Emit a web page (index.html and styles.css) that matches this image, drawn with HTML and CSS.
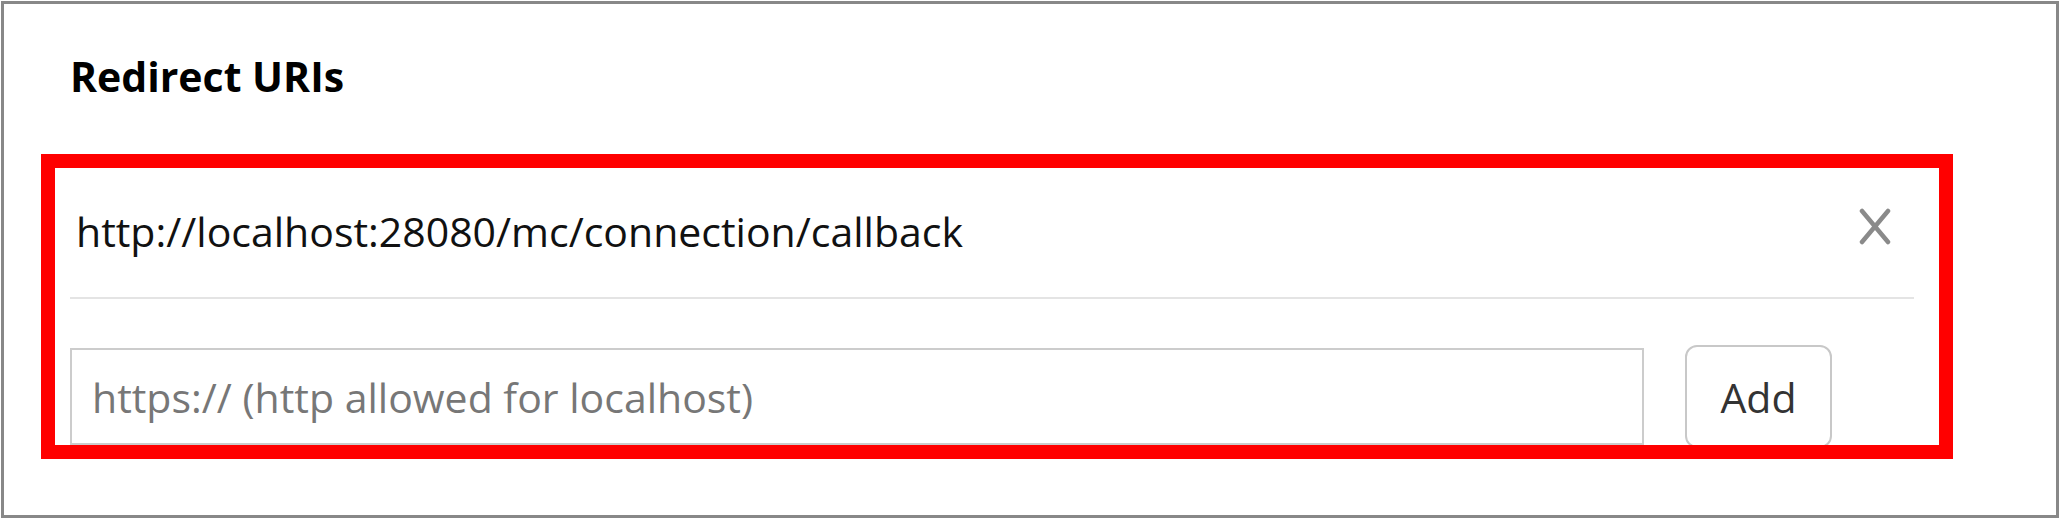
FILE: index.html
```html
<!DOCTYPE html>
<html lang="en">
<head>
    <meta charset="UTF-8">
    <title>Redirect URIs</title>
    <link rel="stylesheet" href="styles.css">
</head>
<body>
    <section class="panel">
        <div class="panel-body">
            <h2>Redirect URIs</h2>
            <div class="uri-item">
                <span class="uri-text">http://localhost:28080/mc/connection/callback</span>
                <button class="remove-btn" aria-label="Remove">
                    <svg width="32" height="37" viewBox="0 0 32 37">
                        <path d="M3 3 L29 34 M29 3 L3 34" stroke="#8a8a8a" stroke-width="4.5" fill="none" stroke-linecap="round"/>
                    </svg>
                </button>
            </div>
            <div class="add-row">
                <input type="text" class="uri-input" placeholder="https:// (http allowed for localhost)">
                <button class="add-btn">Add</button>
            </div>
        </div>
    </section>
    <div class="highlight"></div>
</body>
</html>
```

FILE: styles.css
```css
body {
    margin: 0;
    font-family: 'Open Sans', 'Noto Sans', sans-serif;
    background: #ffffff;
}

.panel {
    box-sizing: border-box;
    margin: 1px;
    width: 2058px;
    height: 517px;
    border: 3px solid #888888;
    padding: 44px 0 0 66px;
}

.panel-body {
    width: 1844px;
}

.panel h2 {
    margin: 0 0 60px;
    font-size: 41px;
    line-height: 57px;
    font-weight: 700;
    color: #000000;
}

.uri-item {
    display: flex;
    align-items: center;
    justify-content: space-between;
    padding: 39px 23px 39px 6px;
    border-bottom: 2px solid #e4e4e4;
}

.uri-text {
    font-size: 41px;
    line-height: 54px;
    color: #111111;
}

.remove-btn {
    border: none;
    background: none;
    padding: 0;
    margin-bottom: 9px;
    display: flex;
}

.add-row {
    display: flex;
    align-items: center;
    gap: 41px;
    margin-top: 46px;
}

.uri-input {
    box-sizing: border-box;
    width: 1574px;
    height: 97px;
    border: 2px solid #cccccc;
    padding: 0 20px;
    font-family: inherit;
    font-size: 41px;
    color: #333333;
}

.uri-input::placeholder {
    color: #777777;
}

.add-btn {
    box-sizing: border-box;
    width: 147px;
    height: 103px;
    border: 2px solid #c8c8c8;
    border-radius: 12px;
    background: #ffffff;
    font-family: inherit;
    font-size: 41px;
    color: #333333;
}

/* annotation frame drawn over the list */
.highlight {
    position: absolute;
    left: 41px;
    top: 154px;
    width: 1912px;
    height: 305px;
    box-sizing: border-box;
    border: 14px solid #ff0000;
    pointer-events: none;
}
```
